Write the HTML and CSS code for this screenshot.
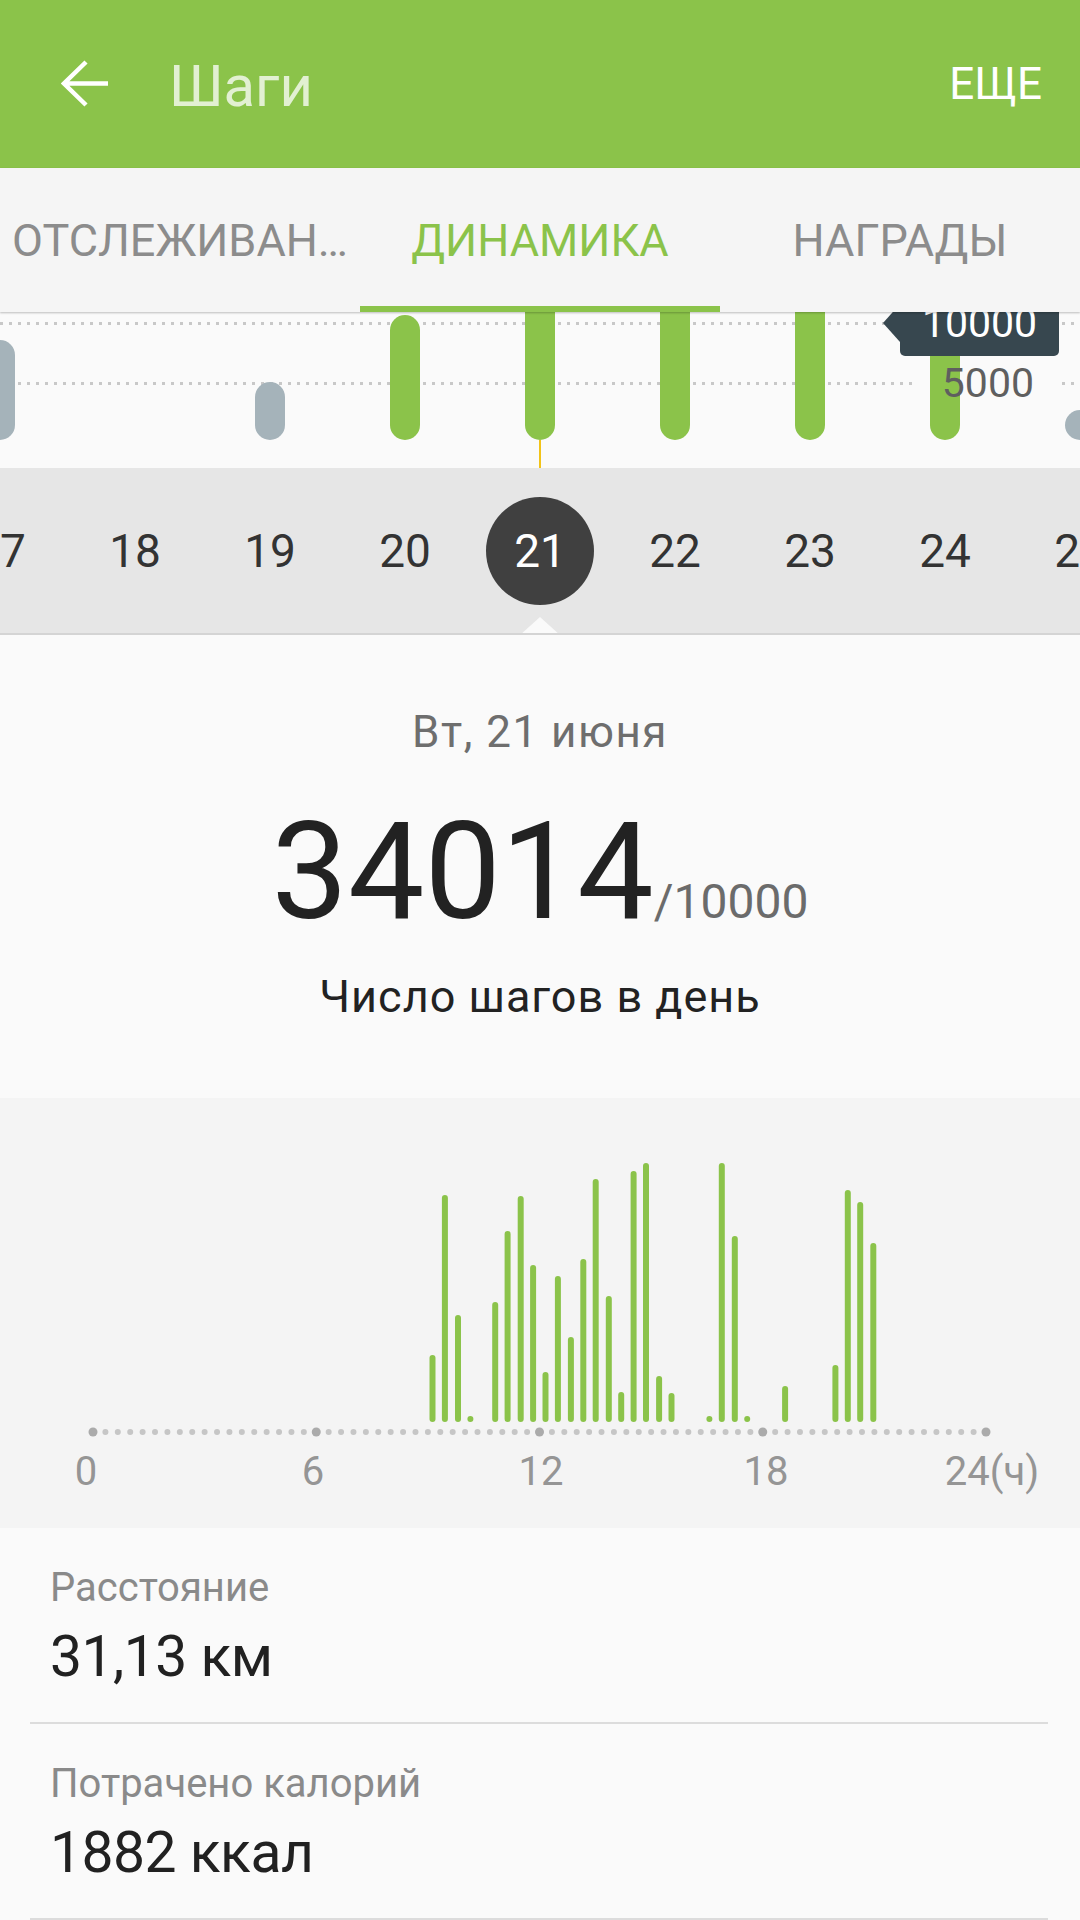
FILE: index.html
```html
<!DOCTYPE html>
<html lang="ru">
<head>
  <meta charset="UTF-8" />
  <meta name="viewport" content="width=device-width, initial-scale=1" />
  <title>Шаги</title>
  <link rel="stylesheet" href="styles.css">
</head>
<body>

  <header class="appbar">
    <svg class="back" width="48" height="48" viewBox="0 0 48 48">
      <path d="M3 23.5H47M25 2L3 23.5L25 45" />
    </svg>
    <h1 class="title">Шаги</h1>
    <span class="more">ЕЩЕ</span>
  </header>

  <nav class="tabs">
    <div class="tab">ОТСЛЕЖИВАН…</div>
    <div class="tab active">ДИНАМИКА</div>
    <div class="tab">НАГРАДЫ</div>
  </nav>

  <!-- дневные столбики -->
  <section class="trend">
    <div class="grid-line line-10k"></div>
    <div class="grid-line line-5k"></div>
    <div class="day-bars">
      <div class="day"><span class="bar idle" style="height:100px"></span></div>
      <div class="day"></div>
      <div class="day"><span class="bar idle" style="height:58px"></span></div>
      <div class="day"><span class="bar" style="height:125px"></span></div>
      <div class="day"><span class="bar" style="height:150px"></span></div>
      <div class="day"><span class="bar" style="height:150px"></span></div>
      <div class="day"><span class="bar" style="height:150px"></span></div>
      <div class="day"><span class="bar" style="height:150px"></span></div>
      <div class="day"><span class="bar idle" style="height:30px"></span></div>
    </div>
    <div class="cursor"></div>
    <div class="goal-tag">10000</div>
    <div class="goal-half">5000</div>
  </section>

  <div class="dates">
    <span class="date">17</span>
    <span class="date">18</span>
    <span class="date">19</span>
    <span class="date">20</span>
    <span class="date selected">21</span>
    <span class="date">22</span>
    <span class="date">23</span>
    <span class="date">24</span>
    <span class="date">25</span>
  </div>

  <section class="summary">
    <div class="day-name">Вт, 21 июня</div>
    <div class="steps">34014<span class="goal">/10000</span></div>
    <div class="steps-label">Число шагов в день</div>
  </section>

  <!-- шаги по часам -->
  <section class="hourly">
    <svg width="1080" height="430" viewBox="0 0 1080 430">
      <g class="hour-bars">
        <rect x="429.5" y="257" width="6" height="67" rx="3" />
        <rect x="441.9" y="97" width="6" height="227" rx="3" />
        <rect x="455" y="217" width="6" height="107" rx="3" />
        <rect x="467.4" y="318" width="6" height="6" rx="3" />
        <rect x="492.2" y="204" width="6" height="120" rx="3" />
        <rect x="504.6" y="133" width="6" height="191" rx="3" />
        <rect x="517.7" y="98" width="6" height="226" rx="3" />
        <rect x="530.1" y="167" width="6" height="157" rx="3" />
        <rect x="542.5" y="274" width="6" height="50" rx="3" />
        <rect x="554.9" y="178" width="6" height="146" rx="3" />
        <rect x="567.9" y="239" width="6" height="85" rx="3" />
        <rect x="580.3" y="161" width="6" height="163" rx="3" />
        <rect x="592.7" y="81" width="6" height="243" rx="3" />
        <rect x="605.8" y="198" width="6" height="126" rx="3" />
        <rect x="618.2" y="294" width="6" height="30" rx="3" />
        <rect x="630.6" y="73" width="6" height="251" rx="3" />
        <rect x="643" y="65" width="6" height="259" rx="3" />
        <rect x="656.1" y="278" width="6" height="46" rx="3" />
        <rect x="668.5" y="295" width="6" height="29" rx="3" />
        <rect x="706.4" y="318" width="6" height="6" rx="3" />
        <rect x="718.8" y="65" width="6" height="259" rx="3" />
        <rect x="731.8" y="138" width="6" height="186" rx="3" />
        <rect x="744.2" y="318" width="6" height="6" rx="3" />
        <rect x="782.1" y="288" width="6" height="36" rx="3" />
        <rect x="832.4" y="267" width="6" height="57" rx="3" />
        <rect x="844.8" y="92" width="6" height="232" rx="3" />
        <rect x="857.2" y="104" width="6" height="220" rx="3" />
        <rect x="870.3" y="145" width="6" height="179" rx="3" />
      </g>
      <line class="axis-dots" x1="93" y1="334" x2="986" y2="334" />
      <g class="axis-major">
        <circle cx="93" cy="334" r="4.5" />
        <circle cx="316.25" cy="334" r="4.5" />
        <circle cx="539.5" cy="334" r="4.5" />
        <circle cx="762.75" cy="334" r="4.5" />
        <circle cx="986" cy="334" r="4.5" />
      </g>
      <g class="axis-labels">
        <text x="86" y="387">0</text>
        <text x="313" y="387">6</text>
        <text x="541" y="387">12</text>
        <text x="766" y="387">18</text>
        <text x="992" y="387">24(ч)</text>
      </g>
    </svg>
  </section>

  <section class="stats">
    <div class="stat">
      <div class="stat-label">Расстояние</div>
      <div class="stat-value">31,13 км</div>
    </div>
    <div class="stat">
      <div class="stat-label">Потрачено калорий</div>
      <div class="stat-value">1882 ккал</div>
    </div>
  </section>

</body>
</html>
```

FILE: styles.css
```css
body {
  margin: 0;
  width: 1080px;
  height: 1920px;
  overflow: hidden;
  background: #fafafa;
  font-family: Roboto, "Noto Sans", sans-serif;
  color: #222;
}

/* шапка */
.appbar {
  display: flex;
  align-items: center;
  height: 168px;
  padding: 0 38px 0 61px;
  background: #8bc34a;
  box-sizing: border-box;
}
.back {
  flex: none;
  fill: none;
  stroke: #fff;
  stroke-width: 4.5;
}
.title {
  margin: 4px 0 0 60px;
  flex: 1;
  font-size: 58px;
  font-weight: normal;
  color: #e2f0d2;
}
.more {
  font-size: 44px;
  color: #fff;
}

/* вкладки */
.tabs {
  position: relative;
  z-index: 2;
  display: flex;
  height: 144px;
  background: #f5f5f5;
  box-shadow: 0 1px 2px rgba(0, 0, 0, 0.25);
}
.tab {
  position: relative;
  flex: 1;
  display: flex;
  align-items: center;
  justify-content: center;
  font-size: 45px;
  color: #8c8c8c;
  white-space: nowrap;
}
.tab.active {
  color: #8bc34a;
}
.tab.active::after {
  content: "";
  position: absolute;
  left: 0;
  right: 0;
  bottom: 0;
  height: 6px;
  background: #8bc34a;
}

/* график по дням */
.trend {
  position: relative;
  height: 156px;
  overflow: hidden;
  background: #fafafa;
}
.grid-line {
  position: absolute;
  left: 0;
  right: 0;
  height: 3px;
  background: repeating-linear-gradient(90deg, #c8c8c8 0 3px, transparent 3px 9px);
}
.line-10k {
  top: 10px;
}
.line-5k {
  top: 70px;
  background:
    linear-gradient(90deg, transparent 912px, #fafafa 912px, #fafafa 1057px, transparent 1057px),
    repeating-linear-gradient(90deg, #c8c8c8 0 3px, transparent 3px 9px);
}
.day-bars {
  position: relative;
  display: flex;
  justify-content: center;
  align-items: flex-end;
  height: 128px;
}
.day {
  flex: none;
  width: 135px;
  display: flex;
  justify-content: center;
}
.bar {
  width: 30px;
  border-radius: 15px;
  background: #8bc34a;
}
.bar.idle {
  background: #a5b3ba;
}
.cursor {
  width: 2px;
  height: 28px;
  margin: 0 auto;
  background: #f2c318;
}
.goal-tag {
  position: absolute;
  top: -16px;
  left: 900px;
  width: 159px;
  height: 60px;
  line-height: 54px;
  border-radius: 0 0 5px 5px;
  background: #37474f;
  color: #fff;
  font-size: 41px;
  text-align: center;
}
.goal-tag::before {
  content: "";
  position: absolute;
  right: 100%;
  top: 8px;
  border-right: 17px solid #37474f;
  border-top: 19px solid transparent;
  border-bottom: 19px solid transparent;
}
.goal-half {
  position: absolute;
  top: 47px;
  right: 46px;
  line-height: 48px;
  font-size: 41px;
  color: #5f5f5f;
}

/* лента дат */
.dates {
  position: relative;
  display: flex;
  justify-content: center;
  align-items: center;
  height: 165px;
  overflow: hidden;
  background: #e6e6e6;
  border-bottom: 2px solid #d4d4d4;
}
.date {
  flex: none;
  width: 135px;
  text-align: center;
  font-size: 46px;
  color: #333;
}
.date.selected {
  width: 108px;
  height: 108px;
  margin: 0 13.5px;
  line-height: 108px;
  border-radius: 50%;
  background: #404040;
  color: #fff;
}
.dates::after {
  content: "";
  position: absolute;
  left: 520px;
  bottom: -2px;
  border-bottom: 18px solid #fafafa;
  border-left: 20px solid transparent;
  border-right: 20px solid transparent;
}

/* итог за день */
.summary {
  padding: 72px 0 74px;
  text-align: center;
}
.day-name {
  font-size: 44px;
  line-height: 50px;
  letter-spacing: 1.5px;
  color: #6e6e6e;
}
.steps {
  margin-top: 47px;
  font-size: 136px;
  line-height: 136px;
  color: #222;
}
.goal {
  font-size: 48px;
  line-height: 1;
  color: #6b6b6b;
}
.steps-label {
  margin-top: 30px;
  font-size: 45px;
  line-height: 54px;
  letter-spacing: 1px;
  color: #222;
}

/* график по часам */
.hourly {
  height: 430px;
  background: #f4f4f4;
}
.hourly svg {
  display: block;
}
.hour-bars rect {
  fill: #8bc34a;
}
.axis-dots {
  stroke: #c6c6c6;
  stroke-width: 6;
  stroke-linecap: round;
  stroke-dasharray: 0 12.403;
}
.axis-major circle {
  fill: #ababab;
}
.axis-labels text {
  font-family: Roboto, "Noto Sans", sans-serif;
  font-size: 40px;
  fill: #959595;
  text-anchor: middle;
}

/* расстояние и калории */
.stat {
  margin: 0 32px 0 30px;
  padding: 36px 0 32px 20px;
  border-bottom: 2px solid #dcdcdc;
}
.stat-label {
  font-size: 40px;
  line-height: 48px;
  color: #8a8a8a;
}
.stat-value {
  margin-top: 12px;
  font-size: 57px;
  line-height: 66px;
  letter-spacing: -0.5px;
  color: #212121;
}
```
